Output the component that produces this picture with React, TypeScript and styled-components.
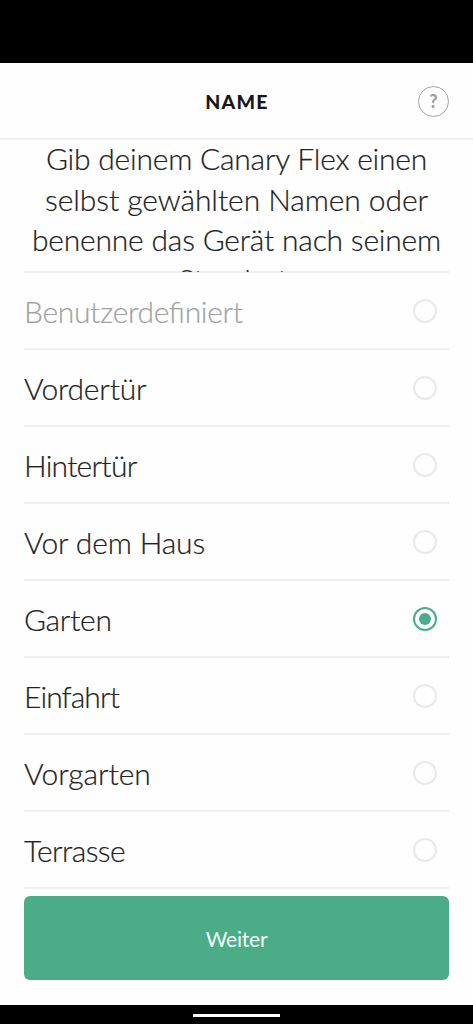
import React, { useState } from "react";
import styled, { createGlobalStyle } from "styled-components";

const GlobalStyle = createGlobalStyle`
  *, *::before, *::after { box-sizing: border-box; }
  body { margin: 0; background: #fff; font-family: Lato, "Open Sans", sans-serif; color: #222; }
`;

const Screen = styled.main`
  display: flex;
  flex-direction: column;
  height: 1024px;
  background: #fefefe;
  overflow: hidden;
`;

const StatusBar = styled.div`
  flex: 0 0 63px;
  background: #000;
`;

const Header = styled.header`
  flex: 0 0 77px;
  display: grid;
  grid-template-columns: 1fr auto 1fr;
  align-items: center;
  padding: 0 24px;
  border-bottom: 2px solid #eeeeee;
`;

const Title = styled.h1`
  grid-column: 2;
  margin: 2px 0 0;
  padding-left: 1px;
  font-size: 19.5px;
  line-height: 24px;
  font-weight: 900;
  letter-spacing: 1.3px;
  color: #181818;
`;

const HelpButton = styled.button`
  justify-self: end;
  width: 31px;
  height: 31px;
  margin-top: 1px;
  padding: 0;
  border: 1.5px solid #a4a4a4;
  border-radius: 50%;
  background: none;
  color: #a0a0a0;
  font: 900 18px/28px Lato, sans-serif;
`;

const Intro = styled.div`
  position: relative;
  z-index: 1;
  flex: 0 0 132px;
  margin-bottom: -1px;
  overflow: hidden;
  text-align: center;
  font-size: 30px;
  font-weight: 300;
  line-height: 40.5px;
  -webkit-text-stroke: 0.2px currentColor;
`;

const IntroLine = styled.div<{ $spacing: number }>`
  letter-spacing: ${(p) => p.$spacing}px;
  white-space: nowrap;

  &:first-child {
    margin-top: -2px;
  }

  &:last-child {
    margin-top: -0.5px;
  }
`;

const List = styled.ul`
  flex: 0 0 618px;
  margin: 0 24px;
  padding: 0;
  list-style: none;
  border-top: 2px solid #eeeeee;
`;

const Row = styled.li`
  display: flex;
  align-items: center;
  justify-content: space-between;
  height: 77px;
  padding-right: 12px;
  border-bottom: 2px solid #eeeeee;
`;

const Label = styled.span<{ $muted?: boolean; $spacing: number }>`
  font-size: 30px;
  font-weight: 300;
  line-height: 40px;
  letter-spacing: ${(p) => p.$spacing}px;
  font-feature-settings: "liga" 1;
  -webkit-text-stroke: 0.2px currentColor;
  color: ${(p) => (p.$muted ? "#a2a2a2" : "#222")};
`;

const Radio = styled.button<{ $checked: boolean }>`
  display: grid;
  place-items: center;
  width: 24px;
  height: 24px;
  padding: 0;
  border: 2px solid ${(p) => (p.$checked ? "#4aad87" : "#e9e9e9")};
  border-radius: 50%;
  background: none;

  &::after {
    content: "";
    width: 12px;
    height: 12px;
    border-radius: 50%;
    background: ${(p) => (p.$checked ? "#4aad87" : "transparent")};
  }
`;

const Footer = styled.footer`
  flex: 1;
  padding: 7px 24px 0;
`;

const NextButton = styled.button`
  display: block;
  width: 100%;
  height: 84px;
  padding: 1px 0 0;
  border: 0;
  border-radius: 6px;
  background: #4aad87;
  color: #f4fffb;
  font: 400 21px/28px Lato, sans-serif;
  letter-spacing: -0.2px;
`;

const NavBar = styled.div`
  flex: 0 0 19px;
  display: flex;
  justify-content: center;
  padding-top: 9px;
  background: #000;
`;

const HomeHandle = styled.div`
  width: 87px;
  height: 3px;
  background: #fff;
`;

const intro = [
  { text: "Gib deinem Canary Flex einen", spacing: -0.22 },
  { text: "selbst gewählten Namen oder", spacing: -0.07 },
  { text: "benenne das Gerät nach seinem", spacing: -0.2 },
  { text: "Standort.", spacing: -0.2 },
];

const options = [
  { text: "Benutzerdefiniert", spacing: -0.33, muted: true },
  { text: "Vordertür", spacing: -0.2 },
  { text: "Hintertür", spacing: -0.75 },
  { text: "Vor dem Haus", spacing: -0.15 },
  { text: "Garten", spacing: -0.3 },
  { text: "Einfahrt", spacing: -0.9 },
  { text: "Vorgarten", spacing: -0.05 },
  { text: "Terrasse", spacing: -0.6 },
];

export default function App() {
  const [selected, setSelected] = useState("Garten");
  return (
    <Screen>
      <GlobalStyle />
      <StatusBar />
      <Header>
        <Title>NAME</Title>
        <HelpButton>?</HelpButton>
      </Header>
      <Intro>
        {intro.map((line) => (
          <IntroLine key={line.text} $spacing={line.spacing}>{line.text}</IntroLine>
        ))}
      </Intro>
      <List>
        {options.map((o) => (
          <Row key={o.text}>
            <Label $muted={o.muted} $spacing={o.spacing}>{o.text}</Label>
            <Radio $checked={selected === o.text} onClick={() => setSelected(o.text)} />
          </Row>
        ))}
      </List>
      <Footer>
        <NextButton>Weiter</NextButton>
      </Footer>
      <NavBar>
        <HomeHandle />
      </NavBar>
    </Screen>
  );
}
